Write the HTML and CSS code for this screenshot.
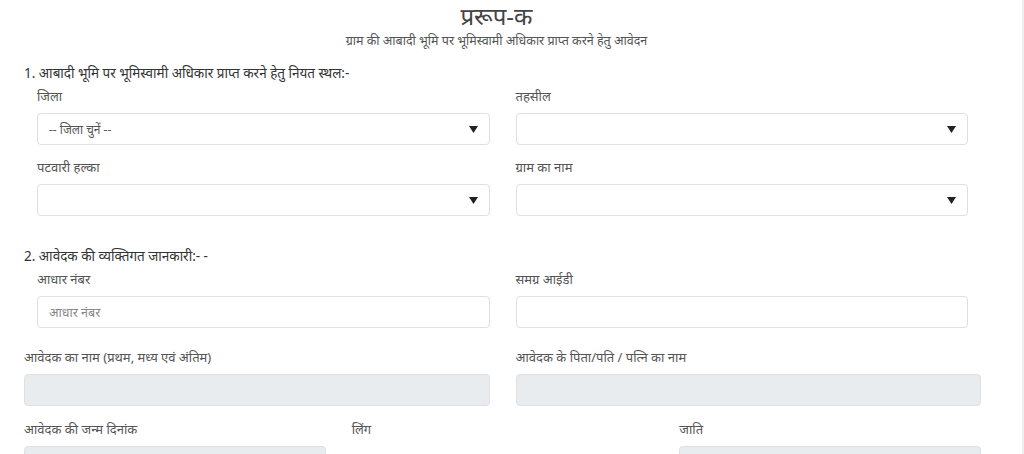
FILE: index.html
```html
<!DOCTYPE html>
<html lang="hi">
<head>
<meta charset="utf-8">
<title>प्ररूप-क</title>
<link rel="stylesheet" href="styles.css">
</head>
<body>
<div class="page">
  <header class="head">
    <h1 class="title">प्ररूप-क</h1>
    <p class="subtitle">ग्राम की आबादी भूमि पर भूमिस्वामी अधिकार प्राप्त करने हेतु आवेदन</p>
  </header>

  <section class="sec sec1">
    <h2 class="sec-title">1. आबादी भूमि पर भूमिस्वामी अधिकार प्राप्त करने हेतु नियत स्थल:-</h2>
    <div class="inner grid2">
      <div class="group">
        <div class="label">जिला</div>
        <div class="select"><span class="sel-text">-- जिला चुनें --</span><svg class="arrow" width="9" height="7" viewBox="0 0 9 7"><path d="M0 0H9L4.5 7Z" fill="#222"/></svg></div>
      </div>
      <div class="group">
        <div class="label">तहसील</div>
        <div class="select"><span class="sel-text"></span><svg class="arrow" width="9" height="7" viewBox="0 0 9 7"><path d="M0 0H9L4.5 7Z" fill="#222"/></svg></div>
      </div>
      <div class="group">
        <div class="label">पटवारी हल्का</div>
        <div class="select"><span class="sel-text"></span><svg class="arrow" width="9" height="7" viewBox="0 0 9 7"><path d="M0 0H9L4.5 7Z" fill="#222"/></svg></div>
      </div>
      <div class="group">
        <div class="label">ग्राम का नाम</div>
        <div class="select"><span class="sel-text"></span><svg class="arrow" width="9" height="7" viewBox="0 0 9 7"><path d="M0 0H9L4.5 7Z" fill="#222"/></svg></div>
      </div>
    </div>
  </section>

  <section class="sec sec2">
    <h2 class="sec-title">2. आवेदक की व्यक्तिगत जानकारी:- -</h2>
    <div class="inner grid2">
      <div class="group">
        <div class="label">आधार नंबर</div>
        <div class="input"><span class="placeholder">आधार नंबर</span></div>
      </div>
      <div class="group">
        <div class="label">समग्र आईडी</div>
        <div class="input"></div>
      </div>
    </div>
    <div class="grid2 outer">
      <div class="group">
        <div class="label">आवेदक का नाम (प्रथम, मध्य एवं अंतिम)</div>
        <div class="input readonly"></div>
      </div>
      <div class="group">
        <div class="label">आवेदक के पिता/पति / पत्नि का नाम</div>
        <div class="input readonly"></div>
      </div>
    </div>
    <div class="grid3 outer">
      <div class="group">
        <div class="label">आवेदक की जन्म दिनांक</div>
        <div class="input readonly"></div>
      </div>
      <div class="group">
        <div class="label">लिंग</div>
      </div>
      <div class="group">
        <div class="label">जाति</div>
        <div class="input readonly"></div>
      </div>
    </div>
  </section>
</div>
<div class="scroll-edge"></div>
</body>
</html>
```

FILE: styles.css
```css
html, body {
  margin: 0;
  padding: 0;
  background: #ffffff;
  height: 100%;
  overflow: hidden;
}
body {
  font-family: "Noto Sans", "Noto Sans Devanagari", "Lohit Devanagari", sans-serif;
  color: #555;
  font-size: 13px;
  display: flex;
}
.page {
  width: 957px;
  padding: 0 41px 0 24px;
  flex: none;
}
.scroll-edge {
  margin-left: auto;
  width: 2px;
  background: #efefef;
}
.head {
  text-align: center;
  padding-right: 12px;
}
.title {
  font-size: 24px;
  font-weight: normal;
  color: #444;
  margin: 0;
  line-height: 32px;
}
.subtitle {
  margin: 0;
  font-size: 12.5px;
  color: #555;
  line-height: 18px;
}
.sec-title {
  font-size: 13.5px;
  font-weight: normal;
  color: #333;
  margin: 0 0 3px 0;
  line-height: 20px;
}
.sec1 { margin-top: 13px; }
.sec2 { margin-top: 30px; }
.inner {
  padding: 0 13px;
}
.grid2 {
  display: grid;
  grid-template-columns: 1fr 1fr;
  column-gap: 26px;
}
.grid3 {
  display: grid;
  grid-template-columns: 1fr 1fr 1fr;
  column-gap: 26px;
}
.sec1 .grid2 { row-gap: 12px; }
.outer { margin-top: 19px; }
.grid3.outer { margin-top: 13px; }
.label {
  line-height: 20px;
  margin-bottom: 7px;
  color: #555;
}
.select, .input {
  height: 32px;
  box-sizing: border-box;
  border: 1px solid #dcdfe3;
  border-radius: 4px;
  background: #fff;
  display: flex;
  align-items: center;
  padding: 0 11px 0 11px;
}
.sel-text {
  flex: 1;
  font-size: 12px;
  color: #555;
}
.arrow { flex: none; margin-top: 1px; }
.placeholder {
  color: #888;
  font-size: 12.5px;
}
.readonly {
  background: #e9ecef;
  border-color: #dde1e5;
}
```
